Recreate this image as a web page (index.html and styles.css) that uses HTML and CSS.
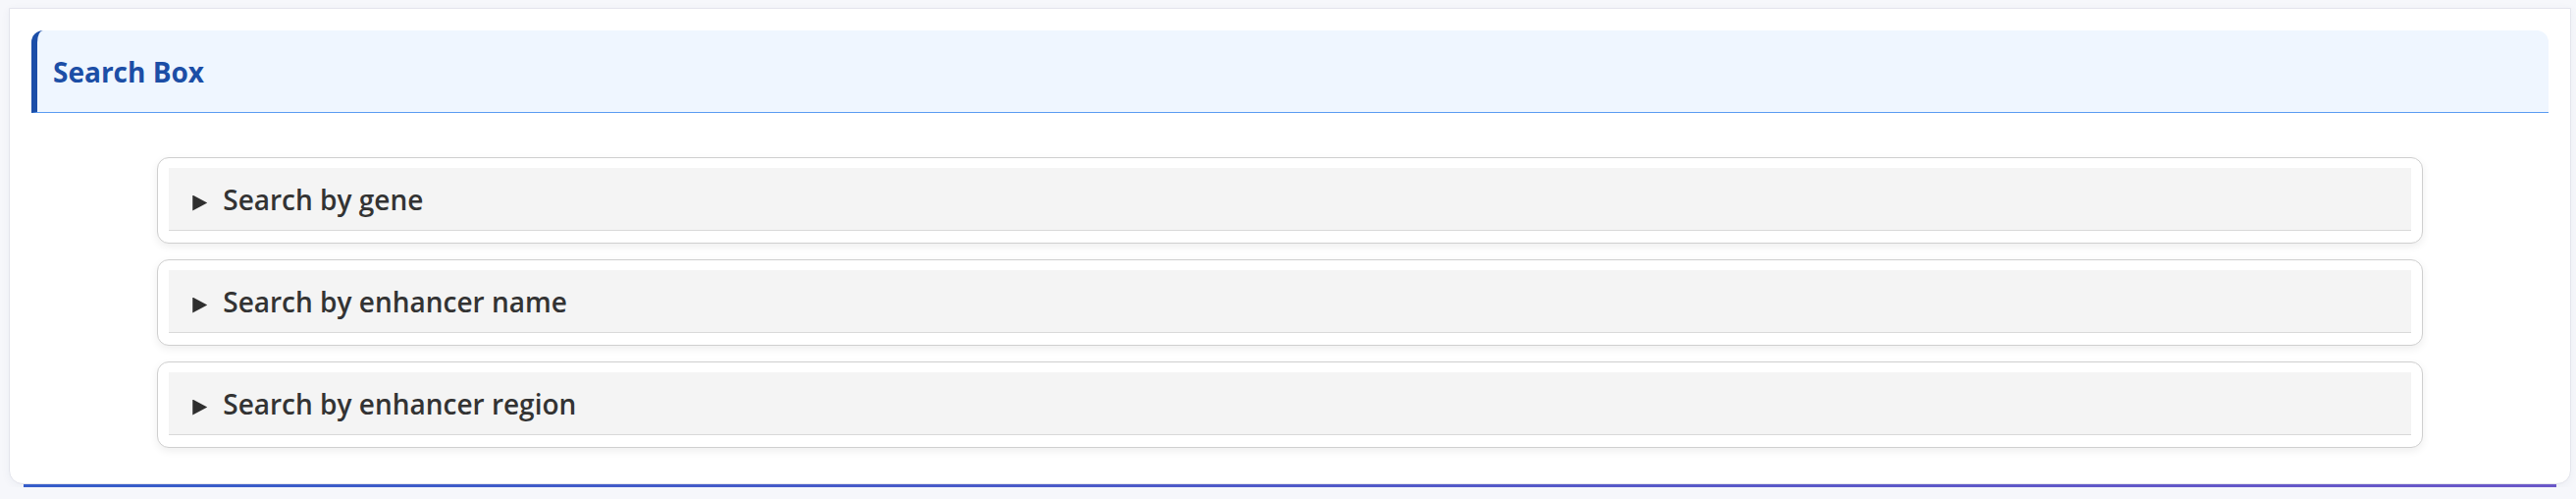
FILE: index.html
```html
<!DOCTYPE html>
<html lang="en">
<head>
<meta charset="utf-8">
<title>Search Box</title>
<link rel="stylesheet" href="styles.css">
</head>
<body>
  <section class="card">
    <h2 class="card-title">Search Box</h2>
    <div class="search-list">
      <details class="search-item">
        <summary class="search-summary">Search by gene</summary>
      </details>
      <details class="search-item">
        <summary class="search-summary">Search by enhancer name</summary>
      </details>
      <details class="search-item">
        <summary class="search-summary">Search by enhancer region</summary>
      </details>
    </div>
  </section>
  <div class="card-accent"></div>
</body>
</html>
```

FILE: styles.css
```css
html, body {
  background: #f6f7fb;
}

body {
  margin: 0;
  padding: 8px 5px 0 9px;
  font-family: "Open Sans", "Noto Sans", sans-serif;
}

.card {
  background: #ffffff;
  border: 1px solid #e3e4ec;
  border-radius: 0 0 14px 14px;
  padding: 22px;
  box-shadow: 0 2px 10px rgba(40, 50, 90, 0.05);
}

.card-accent {
  height: 3px;
  margin: 0 15px;
  background: linear-gradient(90deg, #365dc9, #6a57c8);
}

.card-title {
  margin: 0;
  height: 83px;
  display: flex;
  align-items: center;
  padding-left: 16px;
  background: #eff6ff;
  border-left: 6px solid #1b4ea8;
  border-bottom: 1px solid #5b9cf2;
  border-radius: 12px 12px 0 0;
  color: #1c4ea6;
  font-size: 28px;
  font-weight: 700;
}

.search-list {
  width: 90%;
  margin: 0 auto;
  padding: 45px 0 14px;
  display: flex;
  flex-direction: column;
  gap: 16px;
}

.search-item {
  background: #ffffff;
  border: 1px solid #cfcfcf;
  border-radius: 12px;
  padding: 10px 11px 12px;
  box-shadow: 0 3px 8px rgba(0, 0, 0, 0.07);
}

.search-summary {
  list-style: none;
  display: flex;
  align-items: center;
  gap: 16px;
  height: 63px;
  padding-left: 24px;
  background: #f4f4f4;
  border-bottom: 1px solid #d9d9d9;
  color: #333333;
  font-size: 28px;
  font-weight: 600;
  cursor: pointer;
}

.search-summary::-webkit-details-marker {
  display: none;
}

.search-summary::before {
  content: "";
  width: 15px;
  height: 16px;
  margin-top: 8px;
  background: #2f2f2f;
  clip-path: polygon(0 0, 100% 50%, 0 100%);
}
```
